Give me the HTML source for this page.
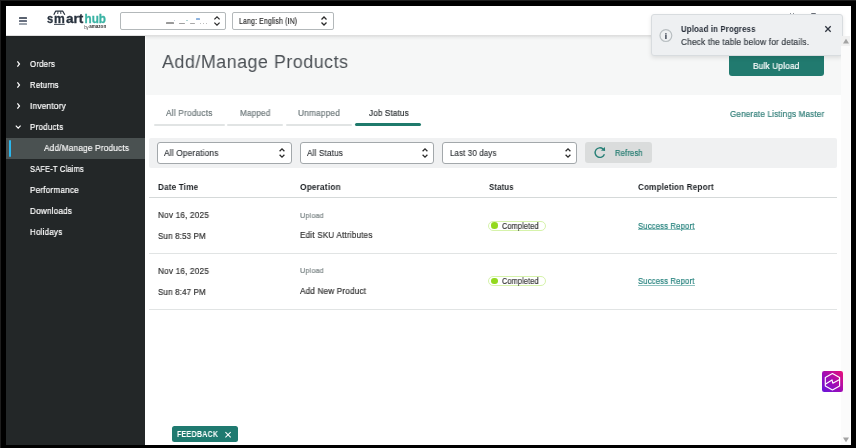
<!DOCTYPE html>
<html><head><meta charset="utf-8"><style>
html,body{margin:0;padding:0;}
body{width:856px;height:448px;background:#000;position:relative;overflow:hidden;font-family:"Liberation Sans", sans-serif;}
body>div{position:absolute;}
svg{will-change:transform;}
.t{white-space:nowrap;line-height:normal;will-change:transform;}
</style></head><body>
<div style="left:0px;top:0px;width:856px;height:1px;background:#1e1e1e"></div>
<div style="left:0px;top:0px;width:1px;height:448px;background:#1e1e1e"></div>
<div style="left:6px;top:6px;width:845px;height:439px;background:#fff"></div>
<div style="left:6px;top:6px;width:845px;height:29px;background:#fff"></div>
<div style="left:18.6px;top:17px;width:8.2px;height:1.6px;background:#5a6270;border-radius:0.5px"></div>
<div style="left:18.6px;top:20.2px;width:8.2px;height:1.6px;background:#687080;border-radius:0.5px"></div>
<div style="left:18.6px;top:23.3px;width:8.2px;height:1.6px;background:#9aa1ab;border-radius:0.5px"></div>
<svg style="position:absolute;left:44px;top:8px" width="66" height="24" viewBox="0 0 66 24">
<g font-family="Liberation Sans" font-weight="700" font-size="13" stroke-width="0.3">
<text x="3.1" y="15" fill="#27313d" stroke="#27313d" textLength="6.2" lengthAdjust="spacingAndGlyphs">s</text>
<text x="10" y="15" fill="#27313d" stroke="#27313d" textLength="10.8" lengthAdjust="spacingAndGlyphs">m</text>
<text x="22" y="15" fill="#27313d" stroke="#27313d" textLength="17.3" lengthAdjust="spacingAndGlyphs">art</text>
<text x="40.5" y="15" fill="#3ab3a4" stroke="#3ab3a4" textLength="21.5" lengthAdjust="spacingAndGlyphs">hub</text>
</g>
<text x="40.2" y="20.6" font-family="Liberation Sans" font-size="4.6" fill="#444" textLength="4.6" lengthAdjust="spacingAndGlyphs">by</text>
<text x="45.2" y="20.4" font-family="Liberation Sans" font-weight="700" font-size="4.8" fill="#333" textLength="17" lengthAdjust="spacingAndGlyphs">amazon</text>
<path d="M9.8 6.8 L11.6 3.2 H18.8 L20.8 6.8" fill="none" stroke="#27313d" stroke-width="1.2" stroke-linejoin="round"/>
<path d="M14 3.4 L13.7 6 M16.6 3.4 L16.9 6" stroke="#27313d" stroke-width="0.9"/>
<path d="M10 16.4 H20.8" stroke="#27313d" stroke-width="0.9"/>
</svg>
<div style="left:120px;top:12px;width:105.8px;height:17.8px;border:1px solid #b3b8ba;border-radius:2px;box-sizing:border-box;background:#fff"></div>
<div style="left:165.8px;top:22.4px;width:8.2px;height:1.8px;background:#9a9a9a;border-radius:0.6px;filter:blur(0.3px)"></div>
<div style="left:174.3px;top:20.2px;width:1.2px;height:1.0px;background:#b8c8d8;border-radius:0.6px;filter:blur(0.3px)"></div>
<div style="left:179.4px;top:22.6px;width:5.2px;height:1.6px;background:#a0a0a0;border-radius:0.6px;filter:blur(0.3px)"></div>
<div style="left:185.5px;top:19.9px;width:2.5px;height:1.1px;background:#a8d0d0;border-radius:0.6px;filter:blur(0.3px)"></div>
<div style="left:190.4px;top:22.8px;width:4.8px;height:1.4px;background:#a8a8a8;border-radius:0.6px;filter:blur(0.3px)"></div>
<div style="left:196.1px;top:18.3px;width:3.7px;height:1.8px;background:#8eb4e0;border-radius:0.6px;filter:blur(0.3px)"></div>
<div style="left:200.4px;top:23px;width:1.0px;height:1.2px;background:#aaa;border-radius:0.6px;filter:blur(0.3px)"></div>
<div style="left:203.1px;top:23px;width:1.0px;height:1.2px;background:#aaa;border-radius:0.6px;filter:blur(0.3px)"></div>
<div style="left:205.8px;top:23px;width:1.0px;height:1.2px;background:#aaa;border-radius:0.6px;filter:blur(0.3px)"></div>
<div style="left:232px;top:12px;width:102px;height:17.8px;border:1px solid #b3b8ba;border-radius:2px;box-sizing:border-box;background:#fff"></div>
<div class="t" style="left:239.4px;top:16px;font-size:8.6px;font-weight:400;color:#333;font-family:'Liberation Sans';transform:scaleX(0.8047);transform-origin:0 0;;letter-spacing:0.2px;-webkit-text-stroke:0.2px #333">Lang: English (IN)</div>
<svg style="position:absolute;left:212px;top:14.8px" width="10" height="12" viewBox="-5 -6 10 12"><path d="M-2.6 -1.6000000000000005 L0 -4.1000000000000005 L2.6 -1.6000000000000005 M-2.6 1.6000000000000005 L0 4.1000000000000005 L2.6 1.6000000000000005" fill="none" stroke="#2a2a2a" stroke-width="1.25"/></svg>
<svg style="position:absolute;left:318.5px;top:15px" width="10" height="12" viewBox="-5 -6 10 12"><path d="M-2.5 -1.4999999999999996 L0 -3.9999999999999996 L2.5 -1.4999999999999996 M-2.5 1.4999999999999996 L0 3.9999999999999996 L2.5 1.4999999999999996" fill="none" stroke="#2a2a2a" stroke-width="1.25"/></svg>
<div style="left:789.5px;top:13.3px;width:1.6px;height:1.4px;background:#6a6f78;border-radius:0.7px"></div>
<div style="left:792.9px;top:13.3px;width:1.6px;height:1.4px;background:#6a6f78;border-radius:0.7px"></div>
<div style="left:810.7px;top:13.2px;width:5px;height:1.6px;background:#6a6f78;border-radius:1px"></div>
<div style="left:6px;top:36px;width:139px;height:409px;background:#232728"></div>
<div class="t" style="left:29.5px;top:59px;font-size:9.2px;font-weight:400;color:#fff;font-family:'Liberation Sans';transform:scaleX(0.8475);transform-origin:0 0;-webkit-text-stroke:0.22px #fff;letter-spacing:0.25px">Orders</div>
<svg style="position:absolute;left:15px;top:59.8px" width="6" height="8" viewBox="0 0 6 8"><path d="M2.4 1.4 L4.5 4 L2.4 6.6" fill="none" stroke="#fff" stroke-width="1.2"/></svg>
<div class="t" style="left:29.5px;top:80px;font-size:9.2px;font-weight:400;color:#fff;font-family:'Liberation Sans';transform:scaleX(0.8452);transform-origin:0 0;-webkit-text-stroke:0.22px #fff;letter-spacing:0.25px">Returns</div>
<svg style="position:absolute;left:15px;top:80.7px" width="6" height="8" viewBox="0 0 6 8"><path d="M2.4 1.4 L4.5 4 L2.4 6.6" fill="none" stroke="#fff" stroke-width="1.2"/></svg>
<div class="t" style="left:29.5px;top:101px;font-size:9.2px;font-weight:400;color:#fff;font-family:'Liberation Sans';transform:scaleX(0.8981);transform-origin:0 0;-webkit-text-stroke:0.22px #fff;letter-spacing:0.25px">Inventory</div>
<svg style="position:absolute;left:15px;top:101.6px" width="6" height="8" viewBox="0 0 6 8"><path d="M2.4 1.4 L4.5 4 L2.4 6.6" fill="none" stroke="#fff" stroke-width="1.2"/></svg>
<div class="t" style="left:29.5px;top:122px;font-size:9.2px;font-weight:400;color:#fff;font-family:'Liberation Sans';transform:scaleX(0.8721);transform-origin:0 0;-webkit-text-stroke:0.22px #fff;letter-spacing:0.25px">Products</div>
<svg style="position:absolute;left:14px;top:123.80000000000001px" width="8" height="6" viewBox="0 0 8 6"><path d="M1.8 1.7 L4.2 4.1 L6.6 1.7" fill="none" stroke="#fff" stroke-width="1.2"/></svg>
<div style="left:6px;top:137.5px;width:139px;height:21px;background:#4a5151"></div>
<div style="left:8.5px;top:139.5px;width:2px;height:17px;background:#2bb7ee;border-radius:1px"></div>
<div class="t" style="left:44.0px;top:143px;font-size:9.2px;font-weight:400;color:#fff;font-family:'Liberation Sans';transform:scaleX(0.8987);transform-origin:0 0;-webkit-text-stroke:0.15px #fff;letter-spacing:0.2px">Add/Manage Products</div>
<div class="t" style="left:29.5px;top:164px;font-size:9.2px;font-weight:400;color:#fff;font-family:'Liberation Sans';transform:scaleX(0.8111);transform-origin:0 0;-webkit-text-stroke:0.22px #fff;letter-spacing:0.25px">SAFE-T Claims</div>
<div class="t" style="left:29.5px;top:185px;font-size:9.2px;font-weight:400;color:#fff;font-family:'Liberation Sans';transform:scaleX(0.8821);transform-origin:0 0;-webkit-text-stroke:0.22px #fff;letter-spacing:0.25px">Performance</div>
<div class="t" style="left:29.5px;top:206px;font-size:9.2px;font-weight:400;color:#fff;font-family:'Liberation Sans';transform:scaleX(0.8838);transform-origin:0 0;-webkit-text-stroke:0.22px #fff;letter-spacing:0.25px">Downloads</div>
<div class="t" style="left:29.5px;top:227px;font-size:9.2px;font-weight:400;color:#fff;font-family:'Liberation Sans';transform:scaleX(0.8692);transform-origin:0 0;-webkit-text-stroke:0.22px #fff;letter-spacing:0.25px">Holidays</div>
<div style="left:146px;top:36px;width:695px;height:59px;background:#f6f7f7"></div>
<div style="left:6px;top:35px;width:835px;height:5px;background:linear-gradient(rgba(0,0,0,.15),rgba(0,0,0,.05) 40%,rgba(0,0,0,0))"></div>
<div class="t" style="left:162.2px;top:51px;font-size:18.8px;font-weight:400;color:#4b5055;font-family:'Liberation Sans';transform:scaleX(0.9545);transform-origin:0 0;letter-spacing:0.5px">Add/Manage Products</div>
<div style="left:729px;top:52px;width:95px;height:23.5px;background:#217a6f;border-radius:3px"></div>
<div class="t" style="left:753.2px;top:61px;font-size:8.8px;font-weight:400;color:#fff;font-family:'Liberation Sans';transform:scaleX(0.9366);transform-origin:0 0;;letter-spacing:0.2px;-webkit-text-stroke:0.2px #fff">Bulk Upload</div>
<div class="t" style="left:166.0px;top:108px;font-size:8.5px;font-weight:400;color:#6f7a7c;font-family:'Liberation Sans';transform:scaleX(0.9767);transform-origin:0 0;;letter-spacing:0.2px;-webkit-text-stroke:0.2px #6f7a7c">All Products</div>
<div style="left:153.8px;top:123.5px;width:71.19999999999999px;height:2px;background:#e1e4e4;border-radius:1px"></div>
<div class="t" style="left:239.9px;top:108px;font-size:8.5px;font-weight:400;color:#6f7a7c;font-family:'Liberation Sans';transform:scaleX(0.9534);transform-origin:0 0;;letter-spacing:0.2px;-webkit-text-stroke:0.2px #6f7a7c">Mapped</div>
<div style="left:227.1px;top:123.5px;width:56.400000000000006px;height:2px;background:#e1e4e4;border-radius:1px"></div>
<div class="t" style="left:298.4px;top:108px;font-size:8.5px;font-weight:400;color:#6f7a7c;font-family:'Liberation Sans';transform:scaleX(0.9733);transform-origin:0 0;;letter-spacing:0.2px;-webkit-text-stroke:0.2px #6f7a7c">Unmapped</div>
<div style="left:285.8px;top:123.5px;width:66.69999999999999px;height:2px;background:#e1e4e4;border-radius:1px"></div>
<div class="t" style="left:368.6px;top:108px;font-size:8.5px;font-weight:400;color:#2f3437;font-family:'Liberation Sans';transform:scaleX(0.9445);transform-origin:0 0;;letter-spacing:0.2px;-webkit-text-stroke:0.2px #2f3437">Job Status</div>
<div style="left:355.4px;top:123px;width:65.70000000000005px;height:2.6px;background:#1f7a6c;border-radius:2px"></div>
<div class="t" style="left:729.5px;top:109px;font-size:8.8px;font-weight:400;color:#2f7d77;font-family:'Liberation Sans';transform:scaleX(0.9155);transform-origin:0 0;;letter-spacing:0.2px;-webkit-text-stroke:0.2px #2f7d77">Generate Listings Master</div>
<div style="left:149px;top:138.4px;width:687.5px;height:29.2px;background:#f0f1f2;border-radius:2px"></div>
<div style="left:157.3px;top:142.3px;width:134.5px;height:21.3px;background:#fff;border:1px solid #a3a8ab;border-radius:3px;box-sizing:border-box"></div>
<div class="t" style="left:164.3px;top:148px;font-size:8.8px;font-weight:400;color:#2f3337;font-family:'Liberation Sans';transform:scaleX(0.9392);transform-origin:0 0;-webkit-text-stroke:0.15px #2f3337;letter-spacing:0.2px">All Operations</div>
<svg style="position:absolute;left:277.45px;top:147.2px" width="10" height="12" viewBox="-5 -6 10 12"><path d="M-2.4 -1.7000000000000002 L0 -4.2 L2.4 -1.7000000000000002 M-2.4 1.7000000000000002 L0 4.2 L2.4 1.7000000000000002" fill="none" stroke="#2a2a2a" stroke-width="1.25"/></svg>
<div style="left:300.2px;top:142.3px;width:134.3px;height:21.3px;background:#fff;border:1px solid #a3a8ab;border-radius:3px;box-sizing:border-box"></div>
<div class="t" style="left:307.0px;top:148px;font-size:8.8px;font-weight:400;color:#2f3337;font-family:'Liberation Sans';transform:scaleX(0.9201);transform-origin:0 0;-webkit-text-stroke:0.15px #2f3337;letter-spacing:0.2px">All Status</div>
<svg style="position:absolute;left:420.15px;top:147.2px" width="10" height="12" viewBox="-5 -6 10 12"><path d="M-2.4 -1.7000000000000002 L0 -4.2 L2.4 -1.7000000000000002 M-2.4 1.7000000000000002 L0 4.2 L2.4 1.7000000000000002" fill="none" stroke="#2a2a2a" stroke-width="1.25"/></svg>
<div style="left:442.4px;top:142.3px;width:134.60000000000002px;height:21.3px;background:#fff;border:1px solid #a3a8ab;border-radius:3px;box-sizing:border-box"></div>
<div class="t" style="left:449.7px;top:148px;font-size:8.8px;font-weight:400;color:#2f3337;font-family:'Liberation Sans';transform:scaleX(0.8902);transform-origin:0 0;-webkit-text-stroke:0.15px #2f3337;letter-spacing:0.2px">Last 30 days</div>
<svg style="position:absolute;left:562.65px;top:147.2px" width="10" height="12" viewBox="-5 -6 10 12"><path d="M-2.4 -1.7000000000000002 L0 -4.2 L2.4 -1.7000000000000002 M-2.4 1.7000000000000002 L0 4.2 L2.4 1.7000000000000002" fill="none" stroke="#2a2a2a" stroke-width="1.25"/></svg>
<div style="left:585.2px;top:142.3px;width:66.8px;height:20.9px;background:#dadcdc;border-radius:3px"></div>
<svg style="position:absolute;left:593px;top:146px" width="14" height="14" viewBox="0 0 14 14"><path d="M11.41 8.24 A4.8 4.8 0 1 1 10.1 3.0" fill="none" stroke="#267f76" stroke-width="1.35"/><path d="M11.9 0.9 L12.1 5.1 L7.9 4.6 Z" fill="#267f76"/></svg>
<div class="t" style="left:615.4px;top:148px;font-size:8.4px;font-weight:400;color:#217a6f;font-family:'Liberation Sans';transform:scaleX(0.9071);transform-origin:0 0;;letter-spacing:0.2px;-webkit-text-stroke:0.2px #217a6f">Refresh</div>
<div class="t" style="left:157.8px;top:182px;font-size:8.6px;font-weight:700;color:#1a1e22;font-family:'Liberation Sans';transform:scaleX(0.9406);transform-origin:0 0;;letter-spacing:0.2px">Date Time</div>
<div class="t" style="left:300.3px;top:182px;font-size:8.6px;font-weight:700;color:#1a1e22;font-family:'Liberation Sans';transform:scaleX(0.9610);transform-origin:0 0;;letter-spacing:0.2px">Operation</div>
<div class="t" style="left:489.0px;top:182px;font-size:8.6px;font-weight:700;color:#1a1e22;font-family:'Liberation Sans';transform:scaleX(0.8987);transform-origin:0 0;;letter-spacing:0.2px">Status</div>
<div class="t" style="left:638.0px;top:182px;font-size:8.6px;font-weight:700;color:#1a1e22;font-family:'Liberation Sans';transform:scaleX(0.9395);transform-origin:0 0;;letter-spacing:0.2px">Completion Report</div>
<div style="left:149px;top:196.8px;width:687.5px;height:1.6px;background:#d5d9d9"></div>
<div class="t" style="left:157.8px;top:210px;font-size:8.8px;font-weight:400;color:#333;font-family:'Liberation Sans';transform:scaleX(0.9316);transform-origin:0 0;;letter-spacing:0.2px;-webkit-text-stroke:0.2px #333">Nov 16, 2025</div>
<div class="t" style="left:157.8px;top:231px;font-size:8.8px;font-weight:400;color:#333;font-family:'Liberation Sans';transform:scaleX(0.9005);transform-origin:0 0;;letter-spacing:0.2px;-webkit-text-stroke:0.2px #333">Sun 8:53 PM</div>
<div class="t" style="left:300.3px;top:211px;font-size:7.4px;font-weight:400;color:#7a8485;font-family:'Liberation Sans';transform:scaleX(0.9708);transform-origin:0 0;;letter-spacing:0.2px;-webkit-text-stroke:0.2px #7a8485">Upload</div>
<div class="t" style="left:300.2px;top:230px;font-size:8.7px;font-weight:400;color:#333;font-family:'Liberation Sans';transform:scaleX(0.9337);transform-origin:0 0;;letter-spacing:0.2px;-webkit-text-stroke:0.2px #333">Edit SKU Attributes</div>
<div style="left:488.2px;top:220.6px;width:57.7px;height:10.2px;border:1.2px solid #d6f3ab;border-radius:6px;box-sizing:border-box;background:#fff"></div>
<div style="left:491.3px;top:222.4px;width:6.6px;height:6.6px;background:#93d91e;border-radius:50%"></div>
<div class="t" style="left:502.2px;top:221px;font-size:8.5px;font-weight:400;color:#333;font-family:'Liberation Sans';transform:scaleX(0.8562);transform-origin:0 0;;letter-spacing:0.2px;-webkit-text-stroke:0.2px #333">Completed</div>
<div class="t" style="left:638.2px;top:221px;font-size:8.4px;font-weight:400;color:#23807c;font-family:'Liberation Sans';transform:scaleX(0.9120);transform-origin:0 0;;letter-spacing:0.2px;-webkit-text-stroke:0.2px #23807c">Success Report</div>
<div style="left:638.2px;top:229.4px;width:57px;height:0.7px;background:#8fc2bf"></div>
<div style="left:149px;top:253px;width:687.5px;height:1.2px;background:#e1e4e4"></div>
<div class="t" style="left:157.8px;top:266px;font-size:8.8px;font-weight:400;color:#333;font-family:'Liberation Sans';transform:scaleX(0.9316);transform-origin:0 0;;letter-spacing:0.2px;-webkit-text-stroke:0.2px #333">Nov 16, 2025</div>
<div class="t" style="left:157.8px;top:287px;font-size:8.8px;font-weight:400;color:#333;font-family:'Liberation Sans';transform:scaleX(0.9005);transform-origin:0 0;;letter-spacing:0.2px;-webkit-text-stroke:0.2px #333">Sun 8:47 PM</div>
<div class="t" style="left:300.3px;top:266px;font-size:7.4px;font-weight:400;color:#7a8485;font-family:'Liberation Sans';transform:scaleX(0.9708);transform-origin:0 0;;letter-spacing:0.2px;-webkit-text-stroke:0.2px #7a8485">Upload</div>
<div class="t" style="left:300.2px;top:286px;font-size:8.7px;font-weight:400;color:#333;font-family:'Liberation Sans';transform:scaleX(0.9353);transform-origin:0 0;;letter-spacing:0.2px;-webkit-text-stroke:0.2px #333">Add New Product</div>
<div style="left:488.2px;top:276.1px;width:57.7px;height:10.2px;border:1.2px solid #d6f3ab;border-radius:6px;box-sizing:border-box;background:#fff"></div>
<div style="left:491.3px;top:277.9px;width:6.6px;height:6.6px;background:#93d91e;border-radius:50%"></div>
<div class="t" style="left:502.2px;top:276px;font-size:8.5px;font-weight:400;color:#333;font-family:'Liberation Sans';transform:scaleX(0.8562);transform-origin:0 0;;letter-spacing:0.2px;-webkit-text-stroke:0.2px #333">Completed</div>
<div class="t" style="left:638.2px;top:276px;font-size:8.4px;font-weight:400;color:#23807c;font-family:'Liberation Sans';transform:scaleX(0.9120);transform-origin:0 0;;letter-spacing:0.2px;-webkit-text-stroke:0.2px #23807c">Success Report</div>
<div style="left:638.2px;top:284.9px;width:57px;height:0.7px;background:#8fc2bf"></div>
<div style="left:149px;top:308.5px;width:687.5px;height:1.2px;background:#e1e4e4"></div>
<div style="left:651px;top:14.3px;width:191.5px;height:41.8px;background:#eef0f2;border:1px solid #d8dcdf;border-radius:3px;box-sizing:border-box;box-shadow:0 2px 4px rgba(0,0,0,.10)"></div>
<svg style="position:absolute;left:659px;top:29px" width="14" height="14" viewBox="0 0 14 14"><circle cx="6.9" cy="6.6" r="5.9" fill="none" stroke="#b9bfc2" stroke-width="1.2"/><rect x="6.2" y="4.2" width="1.4" height="1.3" fill="#3a4250"/><rect x="6.2" y="5.9" width="1.4" height="4.1" fill="#3a4250"/></svg>
<div class="t" style="left:681.1px;top:24px;font-size:8.8px;font-weight:700;color:#262d38;font-family:'Liberation Sans';transform:scaleX(0.8852);transform-origin:0 0;;letter-spacing:0.2px">Upload in Progress</div>
<div class="t" style="left:681.1px;top:37px;font-size:9.0px;font-weight:400;color:#3a4047;font-family:'Liberation Sans';transform:scaleX(0.9194);transform-origin:0 0;;letter-spacing:0.2px;-webkit-text-stroke:0.2px #3a4047">Check the table below for details.</div>
<svg style="position:absolute;left:823.5px;top:25.3px" width="8" height="8" viewBox="0 0 8 8"><path d="M1.3 1.3 L6.7 6.7 M6.7 1.3 L1.3 6.7" stroke="#2f3540" stroke-width="1.3"/></svg>
<div style="left:841px;top:36px;width:9px;height:409px;background:#fbfbfb"></div>
<div style="left:841px;top:36px;width:9px;height:10px;background:#f0f0f0"></div>
<svg style="position:absolute;left:842px;top:38px" width="8" height="6" viewBox="0 0 8 6"><path d="M1 5.4 L4 0.8 L7 5.4 Z" fill="#a3a3a3"/></svg>
<svg style="position:absolute;left:842px;top:437px" width="8" height="6" viewBox="0 0 8 6"><path d="M1 0.6 L4 5.2 L7 0.6 Z" fill="#a3a3a3"/></svg>
<div style="left:171.7px;top:425.8px;width:66.2px;height:16.1px;background:#1f7a70;border-radius:2.5px"></div>
<div class="t" style="left:177.2px;top:429px;font-size:8.4px;font-weight:700;color:#fff;font-family:'Liberation Sans';transform:scaleX(0.8542);transform-origin:0 0;;letter-spacing:0.2px">FEEDBACK</div>
<svg style="position:absolute;left:224px;top:431px" width="8" height="8" viewBox="0 0 8 8"><path d="M1.4 1.2 L6.7 6.3 M6.7 1.2 L1.4 6.3" stroke="#fff" stroke-width="1.05"/></svg>
<svg style="position:absolute;left:822px;top:371px" width="21" height="21" viewBox="0 0 21 21">
<defs><linearGradient id="g" x1="0" y1="1" x2="1" y2="0"><stop offset="0" stop-color="#6516dc"/><stop offset="0.45" stop-color="#9c0cb8"/><stop offset="1" stop-color="#ea1078"/></linearGradient></defs>
<rect x="0" y="0" width="21" height="21" rx="2.2" fill="url(#g)"/>
<path d="M10.45 2.5 L17.6 6.5 L17.6 14.9 L10.45 18.9 L3.3 14.9 L3.3 6.5 Z" fill="none" stroke="#fff" stroke-width="1.15" stroke-linejoin="round"/>
<path d="M3.3 13.2 L10 8.9 L10.8 12.2 L17.6 8.6" fill="none" stroke="#fff" stroke-width="1.15" stroke-linejoin="round"/>
</svg>
</body></html>
